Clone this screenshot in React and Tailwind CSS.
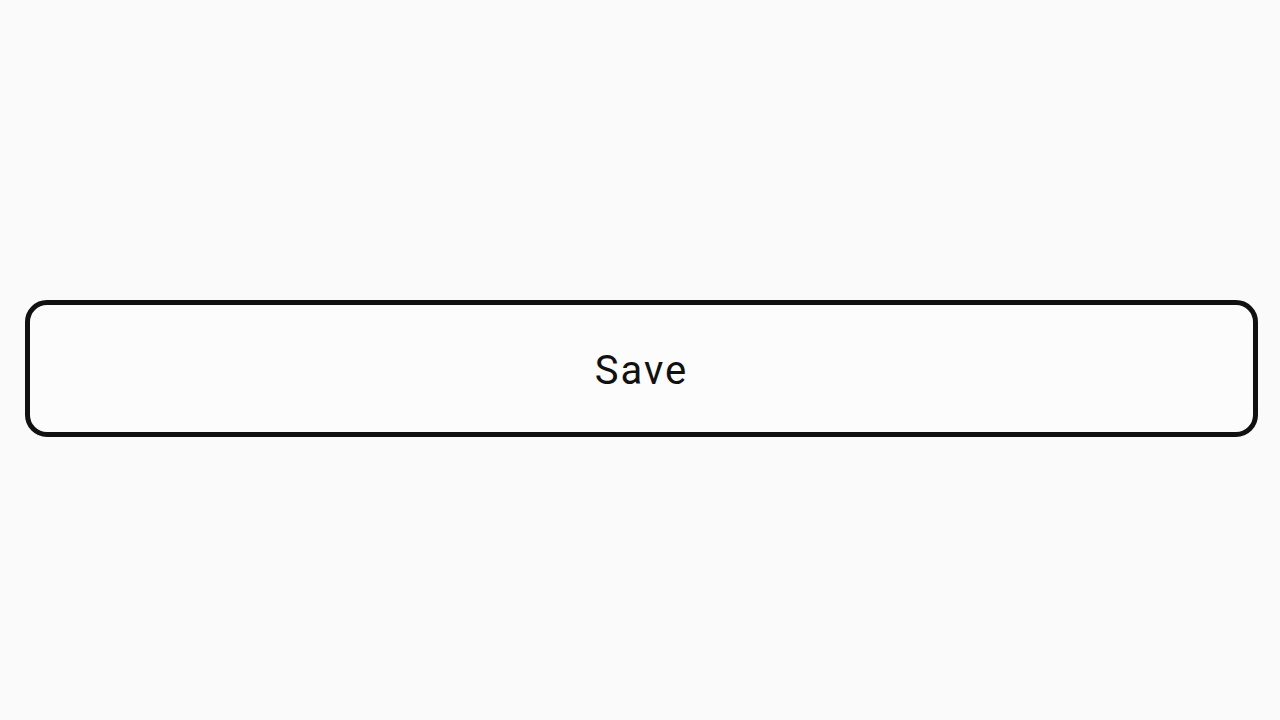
export default function App() {
  return (
    <div className="w-[1280px] h-[720px] bg-[#fafafa] pl-[25px] pt-[300px]" style={{ fontFamily: 'Roboto, "Noto Sans", sans-serif' }}>
      <button className="w-[1233px] h-[137px] border-[5px] border-[#111111] rounded-[22px] bg-[#fcfcfc] flex items-center justify-center text-[40px] tracking-[2px] text-[#111111] leading-none pt-[4px]">
        Save
      </button>
    </div>
  );
}
